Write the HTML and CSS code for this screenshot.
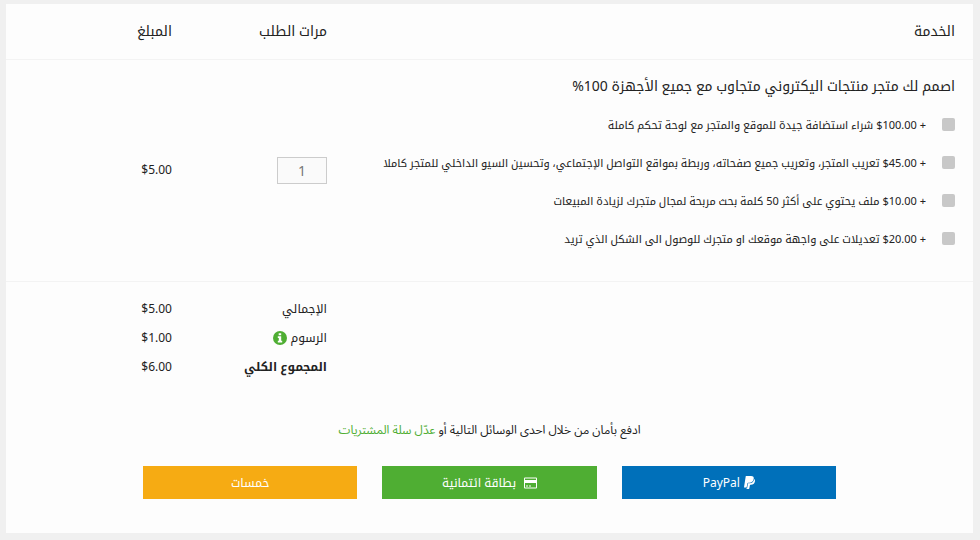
FILE: index.html
```
<!DOCTYPE html>
<html lang="ar" dir="rtl">
<head>
  <meta charset="UTF-8">
  <title>سلة المشتريات</title>
  <link rel="stylesheet" href="styles.css">
</head>
<body>
  <div class="cart">
    <table class="cart-table">
      <thead>
        <tr>
          <th class="col-service">الخدمة</th>
          <th class="col-qty">مرات الطلب</th>
          <th class="col-price">المبلغ</th>
        </tr>
      </thead>
      <tbody>
        <tr class="item">
          <td class="service">
            <h3>اصمم لك متجر منتجات اليكتروني متجاوب مع جميع الأجهزة 100%</h3>
            <ul class="extras">
              <li><input type="checkbox" id="extra1"><label for="extra1">+ <bdi>$100.00</bdi> شراء استضافة جيدة للموقع والمتجر مع لوحة تحكم كاملة</label></li>
              <li><input type="checkbox" id="extra2"><label for="extra2">+ <bdi>$45.00</bdi> تعريب المتجر، وتعريب جميع صفحاته، وربطة بمواقع التواصل الإجتماعي، وتحسين السيو الداخلي للمتجر كاملا</label></li>
              <li><input type="checkbox" id="extra3"><label for="extra3">+ <bdi>$10.00</bdi> ملف يحتوي على أكثر 50 كلمة بحث مربحة لمجال متجرك لزيادة المبيعات</label></li>
              <li><input type="checkbox" id="extra4"><label for="extra4">+ <bdi>$20.00</bdi> تعديلات على واجهة موقعك او متجرك للوصول الى الشكل الذي تريد</label></li>
            </ul>
          </td>
          <td><input class="qty" type="text" value="1" aria-label="مرات الطلب"></td>
          <td><bdi>$5.00</bdi></td>
        </tr>
      </tbody>
      <tfoot>
        <tr>
          <td></td>
          <td>الإجمالي</td>
          <td><bdi>$5.00</bdi></td>
        </tr>
        <tr>
          <td></td>
          <td>الرسوم
            <svg class="info" viewBox="0 0 14 14"><circle cx="7" cy="7" r="7" fill="#4fae33"/><path d="M5.700 2.200h2.500v2H5.700zM4.800 5.200h3.400v4.600h1v1.700H4.800V9.800h1V6.900h-1z" fill="#fff"/></svg>
          </td>
          <td><bdi>$1.00</bdi></td>
        </tr>
        <tr>
          <td></td>
          <td class="total">المجموع الكلي</td>
          <td><bdi>$6.00</bdi></td>
        </tr>
      </tfoot>
    </table>

    <p class="pay-text">ادفع بأمان من خلال احدى الوسائل التالية أو <a href="#">عدّل سلة المشتريات</a></p>

    <div class="pay">
      <button class="btn paypal">
        <svg class="icon-paypal" viewBox="0 0 11 13"><path d="M2.200 0h4.800c2.300 0 3.100 1.200 2.700 3C9.100 5.600 7.500 6.700 5.300 6.700H4.200c-.5 0-.7.300-.8.700L2.600 11.600H.2c-.2 0-.2-.1-.2-.3L1.700.4c.1-.3.200-.4.500-.4z" fill="#fff"/><path d="M10.300 3c.7.700.8 1.600.6 2.500-.5 2.300-1.900 3.300-4 3.300h-.4c-.4 0-.6.200-.7.600l-.5 3.100c-.1.300-.2.500-.5.500H2.700c-.2 0-.3-.1-.3-.3l.1-.4h.6l.9-4.800c0-.2.100-.3.400-.3h1c2.700 0 4.300-1.400 4.900-4.200z" fill="#fff"/></svg>
        PayPal
      </button>
      <button class="btn card">
        <svg class="icon-card" viewBox="0 0 13 12"><path d="M1 .5h11q1 0 1 1v9q0 1-1 1H1q-1 0-1-1v-9q0-1 1-1zM1 1.500V3h11V1.500zM1 6v4.500h11V6zM2 8.500h2v1H2zM5 8.500h2v1H5z" fill="#fff" fill-rule="evenodd"/></svg>
        بطاقة ائتمانية
      </button>
      <button class="btn khamsat">خمسات</button>
    </div>
  </div>
</body>
</html>
```
FILE: styles.css
```
* {
  box-sizing: border-box;
  margin: 0;
  padding: 0;
}
body {
  padding: 4px 7px 7px 6px;
  background: #f0f0f0;
  color: #222;
  font-family: "Noto Sans", "Droid Arabic Kufi", "Noto Kufi Arabic", "DejaVu Sans", sans-serif;
  font-size: 12px;
  line-height: 20px;
}
.cart {
  background: #fdfdfd;
  padding-bottom: 34px;
}
.cart-table {
  width: 100%;
  border-collapse: collapse;
  table-layout: fixed;
}
th {
  height: 55px;
  padding: 0 18px;
  font-size: 14px;
  font-weight: normal;
  text-align: right;
  border-bottom: 1px solid #f3f3f3;
}
td {
  padding: 0 18px;
}
.col-qty {
  width: 155px;
}
.col-price {
  width: 184px;
}
.item td {
  height: 222px;
  border-bottom: 1px solid #f3f3f3;
}
.item .service {
  padding-top: 2px;
}
h3 {
  font-size: 14px;
  font-weight: normal;
  margin-bottom: 19px;
}
.extras {
  list-style: none;
}
.extras li {
  display: flex;
  align-items: center;
  gap: 16px;
  margin-bottom: 18px;
  font-size: 11px;
  white-space: nowrap;
}
.extras input {
  appearance: none;
  flex-shrink: 0;
  width: 13px;
  height: 13px;
  border-radius: 2px;
  background: #c8c8c8;
}
.qty {
  display: block;
  width: 50px;
  height: 27px;
  border: 1px solid #ccc;
  background: #fafafa;
  color: #777;
  font: inherit;
  font-size: 14px;
  text-align: center;
}
tfoot td {
  height: 29px;
}
tfoot tr:first-child td {
  height: 42px;
  padding-top: 13px;
}
.total {
  font-weight: bold;
}
.info {
  width: 14px;
  height: 14px;
  vertical-align: middle;
}
.pay-text {
  margin: 39px 0 26px;
  font-family: "Noto Sans", "Noto Sans Arabic", sans-serif;
  text-align: center;
}
.pay-text a {
  color: #4fae33;
  text-decoration: none;
}
.pay {
  display: flex;
  gap: 25px;
  padding: 0 137px;
}
.btn {
  flex: 1;
  display: flex;
  align-items: center;
  justify-content: center;
  gap: 4px;
  height: 33px;
  border: 0;
  color: #fff;
  font: inherit;
  cursor: pointer;
}
.paypal {
  background: #0070ba;
}
.card {
  gap: 8px;
  background: #4fae33;
}
.khamsat {
  background: #f6ab13;
}
.icon-paypal {
  width: 11px;
  height: 13px;
}
.icon-card {
  width: 13px;
  height: 12px;
}
```
